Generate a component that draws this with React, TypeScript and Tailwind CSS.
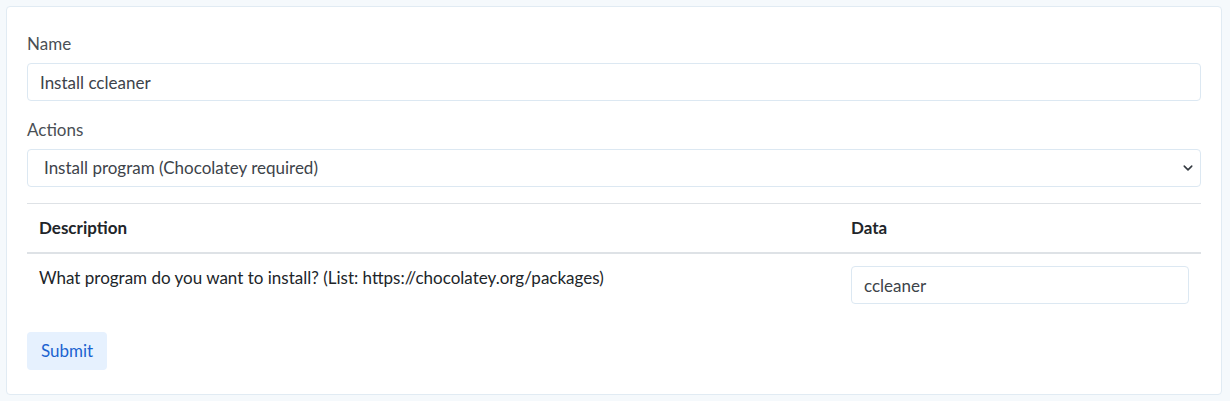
export default function App() {
  return (
    <div className="min-h-[401px] bg-[#f5f9fc] pt-[6px] pl-[6px] pr-[8px] font-['Lato','Liberation_Sans',sans-serif] text-[17px]">
      <div className="rounded-[4px] border border-[#e1ebf3] bg-white px-[20px] pt-[25px] pb-[24px]">
        <form onSubmit={(e) => e.preventDefault()}>
          {/* Name */}
          <label className="block leading-[24px] text-[#4a4f55]">Name</label>
          <input
            defaultValue="Install ccleaner"
            className="mt-[7px] block h-[38px] w-full rounded-[4px] border border-[#dce8f2] px-[12px] text-[#3d434a] outline-none"
          />

          {/* Actions */}
          <label className="mt-[17px] block leading-[24px] text-[#4a4f55]">Actions</label>
          <div className="relative mt-[7px]">
            <select
              defaultValue="choco"
              className="block h-[38px] w-full appearance-none rounded-[4px] border border-[#dce8f2] bg-white pl-[16px] text-[#3d434a] outline-none"
            >
              <option value="choco">Install program (Chocolatey required)</option>
            </select>
            <svg
              className="pointer-events-none absolute right-[7px] top-[14px] h-[10px] w-[12px]"
              viewBox="0 0 16 16"
            >
              <path d="M2 5l6 6 6-6" fill="none" stroke="#343a40" strokeWidth="2.5" strokeLinecap="round" strokeLinejoin="round" />
            </svg>
          </div>

          {/* Table */}
          <table className="mt-[16px] w-full border-collapse text-[#212529]">
            <thead>
              <tr className="border-t border-[#dee2e6]">
                <th className="px-[12px] py-[12px] text-left font-bold leading-[24px]">Description</th>
                <th className="w-[362px] px-[12px] py-[12px] text-left font-bold leading-[24px]">Data</th>
              </tr>
            </thead>
            <tbody>
              <tr className="border-t-2 border-[#dee2e6]">
                <td className="px-[12px] pt-[12px] pb-[13px] align-top leading-[24px]">
                  What program do you want to install? (List: https://chocolatey.org/packages)
                </td>
                <td className="px-[12px] pt-[12px] pb-[13px] align-top">
                  <input
                    defaultValue="ccleaner"
                    className="block h-[38px] w-full rounded-[4px] border border-[#dce8f2] px-[12px] text-[#3d434a] outline-none"
                  />
                </td>
              </tr>
            </tbody>
          </table>

          <button
            type="submit"
            className="mt-[15px] h-[38px] rounded-[4px] bg-[#e6f1fe] px-[14px] text-[#1b63d0]"
          >
            Submit
          </button>
        </form>
      </div>
    </div>
  );
}
